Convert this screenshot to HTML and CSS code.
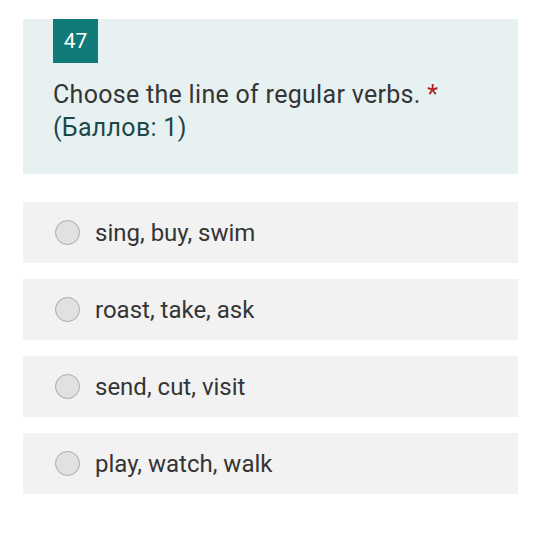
FILE: index.html
```html
<!DOCTYPE html>
<html lang="en">
<head>
<meta charset="UTF-8" />
<meta name="viewport" content="width=device-width, initial-scale=1.0">
<title>Question 47</title>
<link rel="stylesheet" href="styles.css">
</head>
<body>
  <main class="page">
    <!-- question card -->
    <section class="question">
      <div class="number">47</div>
      <p class="title">Choose the line of regular verbs. <span class="req">*</span><br><span class="points">(Баллов: 1)</span></p>
    </section>

    <!-- answer options -->
    <section class="options">
      <label class="option"><span class="radio"></span>sing, buy, swim</label>
      <label class="option"><span class="radio"></span>roast, take, ask</label>
      <label class="option"><span class="radio"></span>send, cut, visit</label>
      <label class="option"><span class="radio"></span>play, watch, walk</label>
    </section>
  </main>
</body>
</html>
```

FILE: styles.css
```css
/* page */
body
{
  margin: 0;
  background: #ffffff;
  font-family: Roboto, "Liberation Sans", sans-serif;
}
.page
{
  padding: 19px 22px 0 23px;
}
/* question card */
.question
{
  background: #e7f1f2;
  padding: 0 30px 30px 30px;
}
.number
{
  width: 45px;
  height: 44px;
  background: #0f7a78;
  color: #ffffff;
  font-size: 21px;
  line-height: 44px;
  text-align: center;
}
.title
{
  margin: 15px 0 0 0;
  font-size: 25px;
  letter-spacing: 0.3px;
  line-height: 33px;
  color: #353535;
}
.req
{
  color: #b22222;
}
.points
{
  color: #1c4848;
}
/* options list */
.options
{
  display: flex;
  flex-direction: column;
  gap: 16px;
  margin-top: 28px;
}
.option
{
  display: flex;
  align-items: center;
  gap: 15px;
  height: 61px;
  padding-left: 32px;
  background: #f2f2f2;
  font-size: 24px;
  color: #353535;
}
.radio
{
  width: 23px;
  height: 23px;
  border: 1px solid #a9a9a9;
  border-radius: 50%;
  background: #e1e1e1;
}
```
